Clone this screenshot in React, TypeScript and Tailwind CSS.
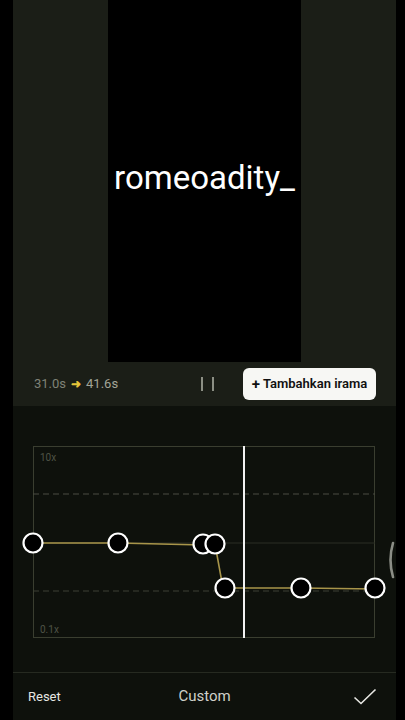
import React from "react";

const points: [number, number][] = [
  [0, 97],
  [85, 97],
  [170, 98],
  [182, 98],
  [192, 142],
  [268, 142],
  [342, 142],
];

function SpeedCurve() {
  return (
    <svg width="342" height="192" viewBox="0 0 342 192" className="overflow-visible">
      <rect x="0.5" y="0.5" width="341" height="191" fill="none" stroke="#3a3e30" strokeWidth="1" />
      <line x1="0" y1="48" x2="342" y2="48" stroke="#4a4d42" strokeWidth="1.2" strokeDasharray="6 4" />
      <line x1="0" y1="97" x2="342" y2="97" stroke="#2a2e24" strokeWidth="1" />
      <line x1="0" y1="145" x2="342" y2="145" stroke="#3c4034" strokeWidth="1" strokeDasharray="6 4" />
      <text x="7" y="15" fill="#4f5346" fontSize="10" fontFamily="Roboto, sans-serif">10x</text>
      <text x="7" y="187" fill="#4f5346" fontSize="10" fontFamily="Roboto, sans-serif">0.1x</text>
      <polyline
        points="0,97 85,97 170,99 182,98 190,142 268,142 342,143"
        fill="none"
        stroke="#a8954a"
        strokeWidth="1.6"
      />
      <line x1="211" y1="0" x2="211" y2="192" stroke="#f2f2f2" strokeWidth="2" />
      {points.map(([x, y], i) => (
        <circle key={i} cx={x} cy={y} r="9.5" fill="#000" stroke="#fff" strokeWidth="2.2" />
      ))}
    </svg>
  );
}

export default function App() {
  return (
    <div
      className="flex h-[720px] w-[405px] bg-black"
      style={{ fontFamily: "Roboto, 'Liberation Sans', sans-serif" }}
    >
      <div className="ml-[13px] flex w-[383px] flex-col">
        {/* preview */}
        <div className="flex h-[362px] justify-center bg-[#1b1e17]">
          <div className="flex w-[193px] items-center justify-center bg-black">
            <span className="pb-[8px] text-[33px] leading-none text-white">romeoadity_</span>
          </div>
        </div>

        {/* toolbar */}
        <div className="flex h-[44px] items-center bg-[#1b1e17] pl-[21px] pr-[20px]">
          <div className="flex items-center gap-[5px] text-[13px]">
            <span className="text-[#7f8276]">31.0s</span>
            <span className="text-[12px] font-bold text-[#e6c53a]">➜</span>
            <span className="text-[#a3a598]">41.6s</span>
          </div>
          <div className="ml-[83px] flex gap-[9px]">
            <div className="h-[14px] w-[2px] bg-[#8c8f84]" />
            <div className="h-[14px] w-[2px] bg-[#8c8f84]" />
          </div>
          <button
            type="button"
            className="ml-auto flex h-[32px] w-[133px] items-center justify-center gap-[3px] rounded-[6px] bg-[#f7f7f4] text-[13px] font-semibold text-[#111]"
          >
            <span className="text-[15px] leading-none">+</span>
            <span>Tambahkan irama</span>
          </button>
        </div>

        {/* curve editor */}
        <div className="relative flex-1 bg-[#0e110c] pl-[20px] pt-[40px]">
          <SpeedCurve />
          <svg
            className="absolute right-[1px] top-[135px]"
            width="8"
            height="38"
            viewBox="0 0 8 38"
            fill="none"
          >
            <path d="M6 2 Q1 19 6 36" stroke="#8b8d86" strokeWidth="2.6" strokeLinecap="round" />
          </svg>
        </div>

        {/* bottom bar */}
        <div className="flex h-[48px] items-center border-t border-[#262a21] bg-[#0e110c] px-[15px]">
          <span className="w-[60px] text-[13px] text-[#e6e6e2]">Reset</span>
          <span className="flex-1 text-center text-[15px] text-[#cfd0c9]">Custom</span>
          <div className="flex w-[60px] justify-end pr-[4px]">
            <svg width="24" height="18" viewBox="0 0 24 18" fill="none">
              <path d="M1.5 9.5 L8 15.5 L22.5 1.5" stroke="#e8e8e4" strokeWidth="1.6" />
            </svg>
          </div>
        </div>
      </div>
    </div>
  );
}
